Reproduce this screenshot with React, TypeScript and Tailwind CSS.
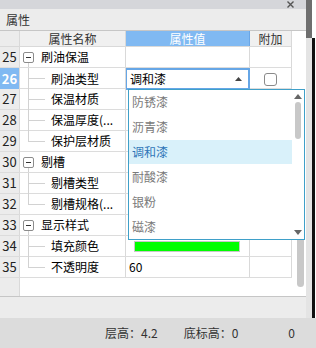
import React from "react";

type Row = {
  n: number;
  type: "group" | "child";
  name: string;
  last?: boolean;
  sel?: boolean;
  color?: boolean;
  value?: string;
};

const rows: Row[] = [
  { n: 25, type: "group", name: "刷油保温" },
  { n: 26, type: "child", name: "刷油类型", sel: true },
  { n: 27, type: "child", name: "保温材质" },
  { n: 28, type: "child", name: "保温厚度(..." },
  { n: 29, type: "child", name: "保护层材质", last: true },
  { n: 30, type: "group", name: "剔槽" },
  { n: 31, type: "child", name: "剔槽类型" },
  { n: 32, type: "child", name: "剔槽规格(...", last: true },
  { n: 33, type: "group", name: "显示样式" },
  { n: 34, type: "child", name: "填充颜色", color: true },
  { n: 35, type: "child", name: "不透明度", value: "60", last: true },
];

const items = ["防锈漆", "沥青漆", "调和漆", "耐酸漆", "银粉", "磁漆"];

const font = { fontFamily: '"Noto Sans CJK SC", "Liberation Sans", sans-serif' };

function NameCell({ r }: { r: Row }) {
  if (r.type === "group") {
    return (
      <div className="relative h-full border-r border-[#d9d9d9]">
        <div className="absolute left-[8px] top-[15px] bottom-0 w-px bg-[#d2d2d2]" />
        <div className="absolute left-[3px] top-[5px] w-[11px] h-[11px] border border-[#8c8c8c] rounded-[2px] bg-white flex items-center justify-center">
          <div className="w-[5px] h-px bg-[#333]" />
        </div>
        <div className="absolute left-[21px] top-0 h-full flex items-center text-[12px] text-black">{r.name}</div>
      </div>
    );
  }
  return (
    <div className="relative h-full border-r border-[#d9d9d9]">
      <div className={`absolute left-[8px] top-0 w-px bg-[#d2d2d2] ${r.last ? "h-[10px]" : "h-[21px]"}`} />
      <div className="absolute left-[8px] top-[10px] w-[17px] h-px bg-[#d2d2d2]" />
      <div className="absolute left-[31px] top-0 h-full flex items-center text-[12px] text-black whitespace-nowrap">{r.name}</div>
    </div>
  );
}

function ValueCell({ r }: { r: Row }) {
  if (r.sel) {
    return (
      <div className="h-full border-2 border-[#66a6e6] -ml-px flex items-center justify-between pl-[3px] pr-[6px] text-[12px] text-black bg-white">
        <span>调和漆</span>
        <svg width="7" height="4" viewBox="0 0 7 4"><path d="M0 4 L3.5 0 L7 4 Z" fill="#444" /></svg>
      </div>
    );
  }
  if (r.color) {
    return (
      <div className="h-full border-r border-[#d9d9d9] flex items-center pl-[8px] pr-[9px]">
        <div className="w-full h-[11px] bg-[#00ff00] border border-[#c8c8c8]" />
      </div>
    );
  }
  return (
    <div className="h-full border-r border-[#d9d9d9] flex items-center pl-[3px] text-[12px] text-black">{r.value ?? ""}</div>
  );
}

export default function App() {
  return (
    <div className="relative w-[316px] h-[348px] bg-[#ececec] overflow-hidden" style={font}>
      <div className="flex h-[318px]">
        <div className="w-[306px] flex flex-col">
          {/* top strip */}
          <div className="h-[9px] bg-[#d5d6da] flex justify-end items-center pr-[12px]">
            <svg width="7" height="7" viewBox="0 0 7 7"><path d="M0.5 0.5 L6.5 6.5 M6.5 0.5 L0.5 6.5" stroke="#555" strokeWidth="1.4" /></svg>
          </div>
          {/* title band */}
          <div className="h-[22px] bg-[#ececec] flex items-center pl-[6px] text-[12px] text-[#333] border-b border-[#c6c6c6]">属性</div>
          {/* table */}
          <div className="flex h-[266px] border-b border-[#c6c6c6] bg-white">
            <div className="w-[292px] flex flex-col">
              <div className="grid grid-cols-[20px_106px_124px_42px] h-[16px] border-b border-[#d9d9d9] text-[12px] leading-none">
                <div className="bg-[#ececec] border-r border-[#d9d9d9]" />
                <div className="bg-[#f0f0f0] border-r border-[#d9d9d9] flex items-center justify-center text-[#333]">属性名称</div>
                <div className="bg-[#80b9f2] border-r border-[#6aa6e6] flex items-center justify-center text-white">属性值</div>
                <div className="bg-[#f0f0f0] border-r border-[#d9d9d9] flex items-center justify-center text-[#333]">附加</div>
              </div>
              {rows.map((r) => (
                <div key={r.n} className="grid grid-cols-[20px_106px_124px_42px] h-[21px] border-b border-[#dcdcdc]">
                  <div
                    className={`flex items-center justify-center text-[13px] border-r border-[#d9d9d9] ${
                      r.sel ? "bg-[#80b9f2] text-white font-bold" : "bg-[#ececec] text-[#222]"
                    }`}
                  >
                    {r.n}
                  </div>
                  <NameCell r={r} />
                  <ValueCell r={r} />
                  <div className="border-r border-[#d9d9d9] flex items-center justify-center">
                    {r.sel && <div className="w-[13px] h-[13px] border border-[#8a8a8a] rounded-[3px] bg-white" />}
                  </div>
                </div>
              ))}
              <div className="flex-1 flex">
                <div className="w-[20px] bg-[#ececec] border-r border-[#d9d9d9]" />
              </div>
            </div>
            {/* table scrollbar */}
            <div className="w-[14px] flex flex-col pt-[88px] pb-[9px] pl-[5px] pr-[2px]">
              <div className="flex-1 bg-[#c8c8c8] rounded-[4px]" />
            </div>
          </div>
          <div className="flex-1 bg-[#ececec]" />
        </div>
        {/* right window edge */}
        <div className="w-[10px] flex">
          <div className="w-[6px] flex flex-col bg-[#e4e4e4]">
            <div className="h-[38px] bg-[#6e6e6e]" />
          </div>
          <div className="w-[3px] flex flex-col">
            <div className="h-[38px] bg-white" />
            <div className="flex-1 bg-[#111]" />
          </div>
          <div className="w-[1px] bg-white" />
        </div>
      </div>
      {/* status bar */}
      <div className="h-[30px] bg-[#dcdcdc] flex items-center text-[12px] text-[#333]">
        <span className="ml-[105px]">层高：4.2</span>
        <span className="ml-[26px]">底标高：0</span>
        <span className="ml-[50px]">0</span>
      </div>

      {/* dropdown overlay */}
      <div className="absolute left-[128px] top-[89px] w-[177px] h-[151px] border border-[#3fa0c9] bg-white flex">
        <div className="w-[163px] flex flex-col">
          {items.map((it, i) => (
            <div
              key={it}
              className={`h-[25px] flex items-center pl-[3px] text-[12px] ${
                i === 2 ? "bg-[#d9f1fa] text-[#2f76b8]" : "text-[#7a7a7a]"
              }`}
            >
              {it}
            </div>
          ))}
        </div>
        <div className="flex-1 flex flex-col items-center pt-[4px] pb-[4px]">
          <svg width="8" height="5" viewBox="0 0 8 5"><path d="M0 5 L4 0 L8 5 Z" fill="#666" /></svg>
          <div className="w-[6px] h-[37px] mt-[3px] bg-[#c8c8c8] rounded-[3px]" />
          <div className="flex-1" />
          <svg width="8" height="5" viewBox="0 0 8 5"><path d="M0 0 L8 0 L4 5 Z" fill="#666" /></svg>
        </div>
      </div>
    </div>
  );
}
